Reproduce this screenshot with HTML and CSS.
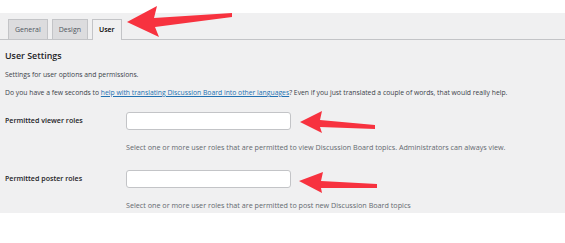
FILE: index.html
```html
<!DOCTYPE html>
<html lang="en">
<head>
    <meta charset="UTF-8">
    <title>User Settings</title>
    <link rel="stylesheet" href="styles.css">
</head>
<body>

<div class="top"></div>
<div class="wrap">
    <div class="tabs">
        <div class="tab">General</div>
        <div class="tab">Design</div>
        <div class="tab active">User</div>
    </div>

    <div class="content">
        <h2 class="title">User Settings</h2>
        <p class="intro">Settings for user options and permissions.</p>
        <p class="intro help">Do you have a few seconds to <a href="#">help with translating Discussion Board into other languages</a>? Even if you just translated a couple of words, that would really help.</p>

        <div class="row">
            <label class="label">Permitted viewer roles</label>
            <div class="field">
                <input class="input" type="text">
                <p class="desc">Select one or more user roles that are permitted to view Discussion Board topics. Administrators can always view.</p>
            </div>
        </div>
        <div class="row">
            <label class="label">Permitted poster roles</label>
            <div class="field">
                <input class="input" type="text">
                <p class="desc">Select one or more user roles that are permitted to post new Discussion Board topics</p>
            </div>
        </div>
    </div>
</div>

<!--红色箭头标注-->
<svg class="arrows" width="565" height="243" viewBox="0 0 565 243">
    <polygon points="127,22 157,6 154,18 232,13 232,17 155,27 159,37"/>
    <polygon points="300,122 322,111 320,120 375,125 375,129 320,127 322,133"/>
    <polygon points="299,181 323,172 321,181 377,184 377,188 321,188 322,193"/>
</svg>

</body>
</html>
```

FILE: styles.css
```css
html,body{
    margin: 0;
    height: 100%;
}
body{
    background: #fff;
    font-family: "Open Sans", "Noto Sans", sans-serif;
    color: #3c434a;
    position: relative;
    overflow: hidden;
}

.top{
    height: 13px;
}

.wrap{
    background: #f0f0f1;
    padding-bottom: 3px;
}

.tabs{
    display: flex;
    gap: 4px;
    padding: 6px 0 0 8px;
    border-bottom: 1px solid #c3c4c7;
    height: 20px;
}

.tab{
    height: 19px;
    line-height: 19px;
    padding: 0 6px;
    font-size: 7px;
    color: #50575e;
    background: #dcdcde;
    border: 1px solid #c3c4c7;
    border-bottom: none;
}

.tab.active{
    background: #f0f0f1;
    color: #000;
    font-weight: 600;
    height: 20px;
    margin-bottom: -1px;
}

.content{
    padding-left: 5px;
}

.title{
    margin: 10px 0 0;
    font-size: 8.9px;
    line-height: 12px;
    font-weight: 600;
    color: #1d2327;
}

.intro{
    margin: 8px 0 0;
    font-size: 6.8px;
    line-height: 10px;
}

.help a{
    color: #2271b1;
}

.row{
    display: grid;
    grid-template-columns: 121px 1fr;
}
.row:first-of-type{
    margin-top: 14px;
}
.row + .row{
    margin-top: 18px;
}

.label{
    font-size: 7.1px;
    font-weight: 600;
    color: #1d2327;
    line-height: 17px;
}

.input{
    display: block;
    width: 165px;
    height: 18px;
    box-sizing: border-box;
    margin: 0;
    border: 1px solid #c3c4c7;
    border-radius: 3px;
    background: #fff;
}

.desc{
    margin: 12px 0 0;
    font-size: 7.2px;
    line-height: 10px;
    color: #646970;
}

.arrows{
    position: absolute;
    top: 0;
    left: 0;
    pointer-events: none;
}
.arrows polygon{
    fill: #f7323f;
}
```
